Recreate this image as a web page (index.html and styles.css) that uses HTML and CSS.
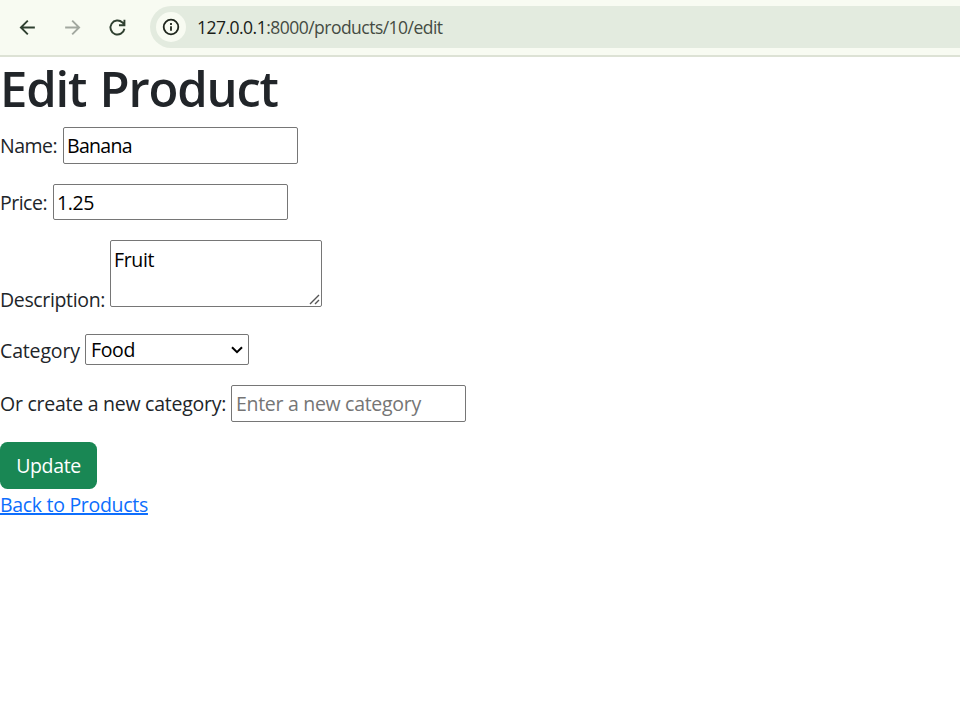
FILE: index.html
```html
<!DOCTYPE html>
<html lang="en">
<head>
<meta charset="utf-8">
<title>Edit Product</title>
<link rel="stylesheet" href="styles.css">
</head>
<body>
<header class="toolbar">
  <svg class="nav" viewBox="0 0 20 20"><path d="M17 10H4M10.3 3.4L3.7 10l6.6 6.6"/></svg>
  <svg class="nav forward" viewBox="0 0 20 20"><path d="M3 10h13M9.7 3.4l6.6 6.6-6.6 6.6"/></svg>
  <svg class="nav" viewBox="0 0 20 20"><path d="M16.6 11.2A6.7 6.7 0 1 1 14.7 5.2L16.3 7M16.6 2.6v5.2h-5.2"/></svg>
  <div class="address">
    <span class="info"><svg viewBox="0 0 18 18"><circle cx="9" cy="9" r="7.3"/><path d="M9 8.2v4.6M9 5v2"/></svg></span>
    <span class="url"><span class="host">127.0.0.1</span>:8000/products/10/edit</span>
  </div>
</header>
<main>
  <h1>Edit Product</h1>
  <form>
    <div class="row name"><label for="name">Name:</label><input id="name" value="Banana"></div>
    <div class="row price"><label for="price">Price:</label><input id="price" value="1.25"></div>
    <div class="row description">
      <label for="description">Description:</label>
      <div class="control"><textarea id="description">Fruit</textarea><svg class="grip" viewBox="0 0 12 12"><path d="M1 10L10 1M6 10l4-4"/></svg></div>
    </div>
    <div class="row category">
      <label for="category">Category</label>
      <div class="control"><select id="category"><option>Food</option></select><svg class="chevron" viewBox="0 0 12 8"><path d="M1 1.2l5 5 5-5"/></svg></div>
    </div>
    <div class="row new-category"><label for="new">Or create a new category:</label><input id="new" placeholder="Enter a new category"></div>
    <button type="button">Update</button>
  </form>
  <a href="#">Back to Products</a>
</main>
</body>
</html>
```
FILE: styles.css
```css
* { box-sizing: border-box; }
body {
  margin: 0;
  background: #fff;
  color: #212529;
  font: 19.5px/30px "Open Sans", "Noto Sans", sans-serif;
}
.toolbar {
  display: flex;
  align-items: center;
  height: 57px;
  padding: 0 0 1px 17px;
  background: #f8fbf2;
  border-bottom: 2px solid #dde2d5;
}
.nav {
  width: 21px;
  height: 21px;
  margin-right: 24px;
  fill: none;
  stroke: #2f4030;
  stroke-width: 1.8;
}
.forward { stroke: #a2a89f; }
.address {
  display: flex;
  flex: 1;
  align-items: center;
  height: 42px;
  margin-left: -2px;
  padding-left: 6px;
  border-radius: 21px 0 0 21px;
  background: #e3ebdf;
}
.info {
  display: flex;
  align-items: center;
  justify-content: center;
  width: 30px;
  height: 30px;
  margin-right: 11px;
  border-radius: 50%;
  background: #f8fbf2;
}
.info svg { width: 18px; height: 18px; fill: none; stroke: #1f261d; stroke-width: 1.8; }
.url { font-size: 17.5px; letter-spacing: -0.52px; color: #454b43; }
.host { color: #1a1d19; }
h1 {
  margin: 0 0 10px;
  padding-top: 2px;
  font-size: 49px;
  line-height: 58px;
  font-weight: 600;
  letter-spacing: -1.2px;
  word-spacing: 2px;
}
.row { display: flex; align-items: center; height: 37px; margin-bottom: 20px; }
label { flex: none; white-space: nowrap; letter-spacing: -0.35px; }
.name label { width: 63px; letter-spacing: -0.5px; }
.price { height: 36px; }
.price label { width: 53px; padding-top: 1px; letter-spacing: -0.5px; }
.description { height: 67px; margin-bottom: 27px; }
.description label { width: 110px; padding-top: 53px; }
.category { height: 31px; }
.category label { width: 85px; padding-top: 2px; letter-spacing: -0.15px; }
.new-category label { width: 231px; letter-spacing: -0.26px; }
input, textarea, select {
  display: block;
  height: 100%;
  margin: 0;
  border: 1px solid #767676;
  border-radius: 2px;
  background: #fff;
  color: #000;
  font: inherit;
  letter-spacing: -0.35px;
}
.control { position: relative; height: 100%; }
input { width: 235px; padding: 1px 3px; }
.name input { letter-spacing: -0.7px; }
.new-category input { padding-left: 4px; letter-spacing: -0.3px; }
textarea { width: 212px; padding: 4px 3px; overflow: hidden; resize: none; }
select { width: 164px; padding: 0 5px; appearance: none; }
.grip, .chevron { position: absolute; fill: none; pointer-events: none; }
.grip { right: 1px; bottom: 1px; width: 12px; height: 12px; stroke: #555; stroke-width: 1.4; }
.chevron { right: 6px; top: 12px; width: 12px; height: 8px; stroke: #000; stroke-width: 2; }
::placeholder { color: #757575; }
button {
  display: block;
  width: 97px;
  height: 47px;
  padding: 0;
  border: 0;
  border-radius: 7.5px;
  background: #198754;
  color: #fff;
  font: inherit;
  letter-spacing: -0.35px;
}
a {
  display: block;
  width: fit-content;
  margin-top: 1px;
  color: #0d6efd;
  letter-spacing: -0.3px;
  text-decoration-thickness: 2px;
  text-decoration-skip-ink: none;
}
```
